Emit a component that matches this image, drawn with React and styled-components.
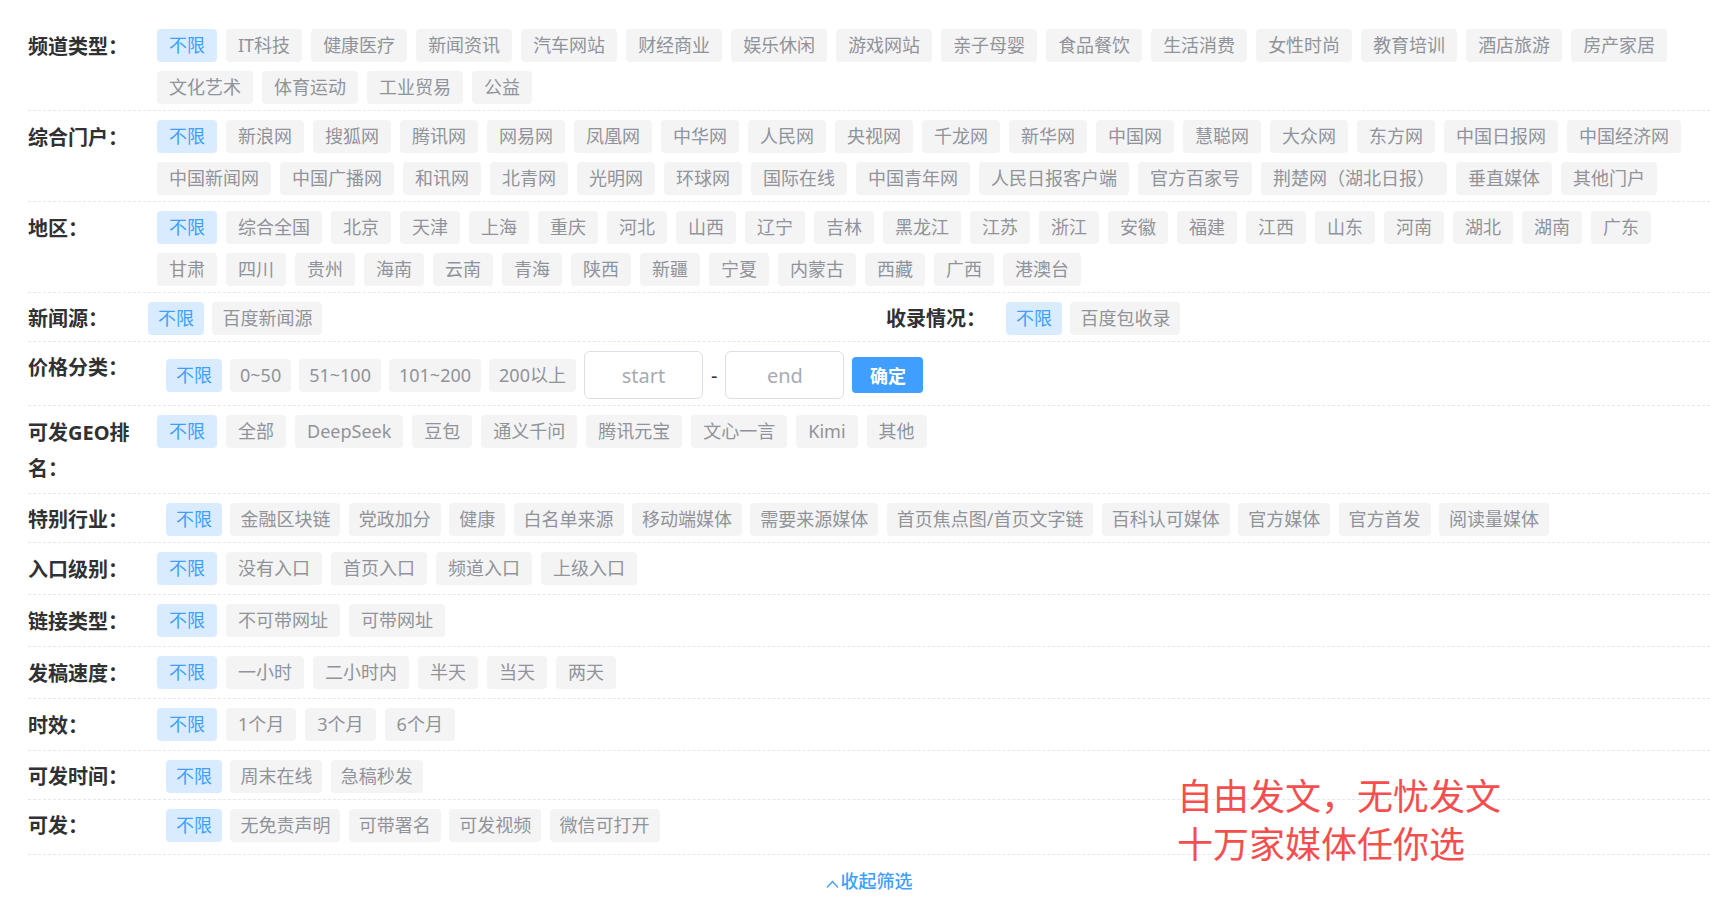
import React from "react";
import styled, { createGlobalStyle } from "styled-components";

const GlobalStyle = createGlobalStyle`
  body {
    margin: 0;
    background: #fff;
    font-family: "Noto Sans", "Noto Sans CJK SC", sans-serif;
  }
`;

// two layouts used by the filter rows
const VARIANTS = {
  wide: { col: 129, lh: 36, pad: 12, gap: 9 },
  compact: { col: 138, lh: 33, pad: 10, gap: 8.4 },
  source: { col: 120, lh: 33, pad: 10, gap: 8.4 },
};

const Page = styled.div`
  position: relative;
  padding: 20px 0 0 28px;
`;

const Section = styled.div`
  display: flex;
  align-items: flex-start;
  padding: 9px 0 ${(p) => p.$pb}px;
  border-bottom: 1px dashed #e4e7ed;
`;

const Group = styled.div`
  display: flex;
  align-items: flex-start;
  flex: ${(p) => (p.$w ? `0 0 ${p.$w}px` : "1")};
`;

const Label = styled.div`
  flex: 0 0 ${(p) => p.$w}px;
  box-sizing: border-box;
  padding-right: ${(p) => p.$w - 110}px;
  font-size: 20px;
  font-weight: 700;
  color: #303133;
  line-height: ${(p) => p.$lh}px;
`;

const TagList = styled.div`
  flex: 1;
  display: flex;
  flex-wrap: wrap;
  align-items: center;
  gap: ${(p) => p.$gap}px;
  padding-right: 10px;
`;

const Tag = styled.span`
  box-sizing: border-box;
  height: 33px;
  line-height: 33px;
  padding: 0 ${(p) => p.$pad}px;
  border-radius: 4px;
  font-size: 18px;
  white-space: nowrap;
  cursor: pointer;
  color: ${(p) => (p.$active ? "#409eff" : "#909399")};
  background: ${(p) => (p.$active ? "#d9ecff" : "#f4f4f5")};
`;

const RangeInput = styled.input`
  box-sizing: border-box;
  width: 119px;
  height: 48px;
  border: 1px solid #dcdfe6;
  border-radius: 6px;
  font-family: inherit;
  font-size: 20px;
  text-align: center;
  color: #606266;
  outline: none;

  &::placeholder {
    color: #a8abb2;
  }
`;

const Dash = styled.span`
  font-size: 20px;
  color: #303133;
`;

const ConfirmButton = styled.button`
  width: 71px;
  height: 36px;
  border: none;
  border-radius: 4px;
  background: #409eff;
  color: #fff;
  font-family: inherit;
  font-size: 18px;
  font-weight: 700;
  cursor: pointer;
`;

const Collapse = styled.div`
  padding-top: 17px;
  text-align: center;
  color: #409eff;
  font-size: 18px;
  font-weight: 500;
  line-height: 18px;
  cursor: pointer;

  svg {
    margin-right: 2px;
    vertical-align: 0;
  }
`;

const Slogan = styled.div`
  position: absolute;
  left: 1177px;
  top: 770px;
  color: #f54e4e;
  font-family: "Noto Sans CJK SC", sans-serif;
  font-size: 36px;
  line-height: 48px;
`;

const filters = [
  {
    label: "频道类型：",
    variant: "wide",
    options: ["不限", "IT科技", "健康医疗", "新闻资讯", "汽车网站", "财经商业", "娱乐休闲", "游戏网站", "亲子母婴", "食品餐饮", "生活消费", "女性时尚", "教育培训", "酒店旅游", "房产家居", "文化艺术", "体育运动", "工业贸易", "公益"],
  },
  {
    label: "综合门户：",
    variant: "wide",
    options: ["不限", "新浪网", "搜狐网", "腾讯网", "网易网", "凤凰网", "中华网", "人民网", "央视网", "千龙网", "新华网", "中国网", "慧聪网", "大众网", "东方网", "中国日报网", "中国经济网", "中国新闻网", "中国广播网", "和讯网", "北青网", "光明网", "环球网", "国际在线", "中国青年网", "人民日报客户端", "官方百家号", "荆楚网（湖北日报）", "垂直媒体", "其他门户"],
  },
  {
    label: "地区：",
    variant: "wide",
    options: ["不限", "综合全国", "北京", "天津", "上海", "重庆", "河北", "山西", "辽宁", "吉林", "黑龙江", "江苏", "浙江", "安徽", "福建", "江西", "山东", "河南", "湖北", "湖南", "广东", "甘肃", "四川", "贵州", "海南", "云南", "青海", "陕西", "新疆", "宁夏", "内蒙古", "西藏", "广西", "港澳台"],
  },
];

const lowerFilters = [
  { label: "可发GEO排名：", variant: "wide", options: ["不限", "全部", "DeepSeek", "豆包", "通义千问", "腾讯元宝", "文心一言", "Kimi", "其他"] },
  { label: "特别行业：", variant: "compact", options: ["不限", "金融区块链", "党政加分", "健康", "白名单来源", "移动端媒体", "需要来源媒体", "首页焦点图/首页文字链", "百科认可媒体", "官方媒体", "官方首发", "阅读量媒体"] },
  { label: "入口级别：", variant: "wide", options: ["不限", "没有入口", "首页入口", "频道入口", "上级入口"] },
  { label: "链接类型：", variant: "wide", options: ["不限", "不可带网址", "可带网址"] },
  { label: "发稿速度：", variant: "wide", options: ["不限", "一小时", "二小时内", "半天", "当天", "两天"] },
  { label: "时效：", variant: "wide", options: ["不限", "1个月", "3个月", "6个月"] },
  { label: "可发时间：", variant: "compact", options: ["不限", "周末在线", "急稿秒发"] },
  { label: "可发：", variant: "compact", options: ["不限", "无免责声明", "可带署名", "可发视频", "微信可打开"], pb: 12 },
];

const priceOptions = ["不限", "0~50", "51~100", "101~200", "200以上"];

const Tags = ({ options, v }) => (
  <TagList $gap={v.gap}>
    {options.map((o, i) => (
      <Tag key={o} $pad={v.pad} $active={i === 0}>
        {o}
      </Tag>
    ))}
  </TagList>
);

const FilterRow = ({ label, variant, options, pb = 6 }) => {
  const v = VARIANTS[variant];
  return (
    <Section $pb={pb}>
      <Label $w={v.col} $lh={v.lh}>
        {label}
      </Label>
      <Tags options={options} v={v} />
    </Section>
  );
};

const ChevronUp = () => (
  <svg width="13" height="8" viewBox="0 0 13 8">
    <polyline points="1,7.5 6.5,1.5 12,7.5" fill="none" stroke="#409eff" strokeWidth="1.3" />
  </svg>
);

export default function App() {
  const src = VARIANTS.source;
  const cmp = VARIANTS.compact;

  return (
    <>
      <GlobalStyle />
      <Page>
        {filters.map((f) => (
          <FilterRow key={f.label} {...f} />
        ))}

        <Section $pb={6}>
          <Group $w={858}>
            <Label $w={src.col} $lh={src.lh}>
              新闻源：
            </Label>
            <Tags options={["不限", "百度新闻源"]} v={src} />
          </Group>
          <Group>
            <Label $w={src.col} $lh={src.lh}>
              收录情况：
            </Label>
            <Tags options={["不限", "百度包收录"]} v={src} />
          </Group>
        </Section>

        <Section $pb={6}>
          <Label $w={cmp.col} $lh={cmp.lh}>
            价格分类：
          </Label>
          <TagList $gap={8}>
            {priceOptions.map((o, i) => (
              <Tag key={o} $pad={cmp.pad} $active={i === 0}>
                {o}
              </Tag>
            ))}
            <RangeInput placeholder="start" />
            <Dash>-</Dash>
            <RangeInput placeholder="end" />
            <ConfirmButton>确定</ConfirmButton>
          </TagList>
        </Section>

        {lowerFilters.map((f) => (
          <FilterRow key={f.label} {...f} />
        ))}

        <Collapse>
          <ChevronUp />
          收起筛选
        </Collapse>

        <Slogan>
          自由发文，无忧发文
          <br />
          十万家媒体任你选
        </Slogan>
      </Page>
    </>
  );
}
